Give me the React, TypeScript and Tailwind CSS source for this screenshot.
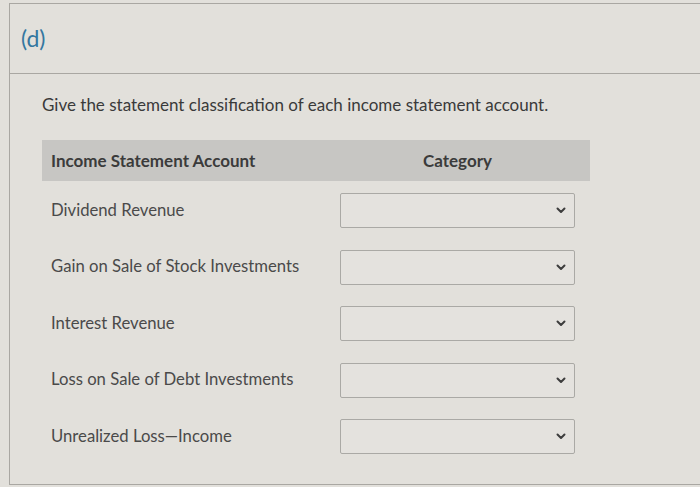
import React from "react";

const accounts = [
  "Dividend Revenue",
  "Gain on Sale of Stock Investments",
  "Interest Revenue",
  "Loss on Sale of Debt Investments",
  "Unrealized Loss\u2014Income",
];

const Chevron = () => (
  <svg width="10" height="7" viewBox="0 0 10 7" className="text-[#3d3d3d]">
    <polyline points="1.5,1.5 5,5 8.5,1.5" fill="none" stroke="currentColor" strokeWidth="2" strokeLinecap="round" strokeLinejoin="round" />
  </svg>
);

const App: React.FC = () => {
  return (
    <div className="w-[700px] h-[487px] overflow-hidden bg-[#e2e0db] pt-[3px] pl-[9px] font-['Lato','Liberation_Sans',sans-serif]">
      <div className="border-l border-t border-b border-[#a9a7a2] h-[482px]">
        {/* part label */}
        <div className="h-[70px] flex items-center pl-[11px] border-b border-[#a9a7a2]">
          <span className="text-[23px] text-[#3477a0] leading-none">(d)</span>
        </div>

        <div className="pl-[32px] pt-[20px]">
          <p className="text-[17px] leading-[22px] text-[#3a3a3a]">
            Give the statement classification of each income statement account.
          </p>

          <div className="mt-[24px] w-[548px]">
            {/* header */}
            <div className="grid grid-cols-[288px_260px] h-[41px] bg-[#c7c6c3] items-center">
              <span className="pl-[9px] text-[17px] font-bold text-[#3b3b3b]">Income Statement Account</span>
              <span className="ml-[10px] w-[235px] text-center text-[17px] font-bold text-[#3b3b3b]">Category</span>
            </div>

            {/* rows */}
            <div className="flex flex-col gap-[21.5px] mt-[12px]">
              {accounts.map((a) => (
                <div key={a} className="grid grid-cols-[288px_260px] items-center">
                  <span className="pl-[9px] text-[16.7px] text-[#4a4a4a]">{a}</span>
                  <div className="ml-[10px] w-[235px] h-[35px] border border-[#aaa9a5] rounded-[2px] bg-[#e4e2de] flex items-center justify-end pr-[8px]">
                    <Chevron />
                  </div>
                </div>
              ))}
            </div>
          </div>
        </div>
      </div>
    </div>
  );
};

export default App;
